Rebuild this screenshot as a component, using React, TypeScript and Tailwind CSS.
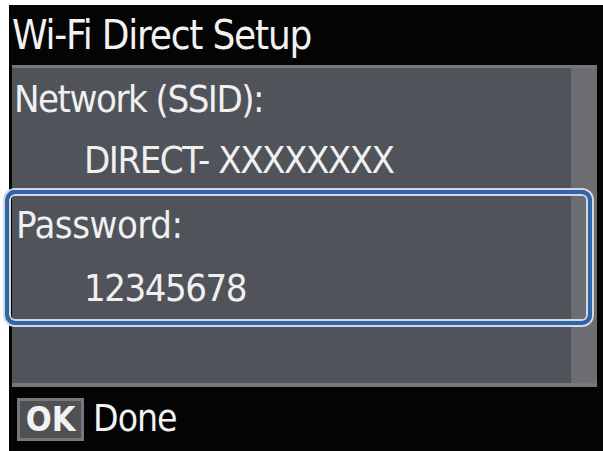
export default function App() {
  const lcd = { fontFamily: '"DejaVu Sans Condensed", "DejaVu Sans", sans-serif' };

  return (
    <div className="w-[603px] h-[451px] bg-white flex flex-col" style={lcd}>
      <div className="ml-[9px] mt-[5px] flex-1 bg-[#040404] flex flex-col">
        {/* title */}
        <div className="h-[60px] pl-[3px] flex items-center text-[40px] text-[#f2f2f2] font-stretch-condensed tracking-[-1.2px]">
          Wi-Fi Direct Setup
        </div>

        {/* list panel */}
        <div className="ml-[3px] mr-[6px] h-[322px] border-t-[3px] border-b-[4px] border-[#75777d] bg-[#50535a] flex">
          <div className="flex-1 flex flex-col text-[38px] text-[#f0f0f0] font-stretch-condensed tracking-[-1.5px]">
            <div className="h-[62px] pl-[2px] flex items-center">Network (SSID):</div>
            <div className="h-[60px] pl-[72px] flex items-center">DIRECT- XXXXXXXX</div>
            <div className="relative z-10 -ml-[7px] -mr-[21px] h-[135px] rounded-[10px] border-[4px] border-[#2b66ac] shadow-[0_0_0_2px_#d6d8de,inset_0_0_0_2px_#d6d8de] flex flex-col">
              <div className="h-[63px] pl-[7px] flex items-center tracking-[-0.5px]">Password:</div>
              <div className="h-[63px] pl-[75px] flex items-center">12345678</div>
            </div>
          </div>
          <div className="w-[26px] bg-[#6b6d73]" />
        </div>

        {/* footer */}
        <div className="flex-1 flex items-center pl-[8px] gap-[9px]">
          <div className="w-[67px] h-[43px] border-[3px] border-[#77787b] bg-[#505154] flex items-center justify-center text-[34px] font-bold text-[#f2f2f2] leading-none">
            OK
          </div>
          <div className="text-[37px] text-[#f2f2f2] font-stretch-condensed tracking-[-1px]">Done</div>
        </div>
      </div>
    </div>
  );
}
